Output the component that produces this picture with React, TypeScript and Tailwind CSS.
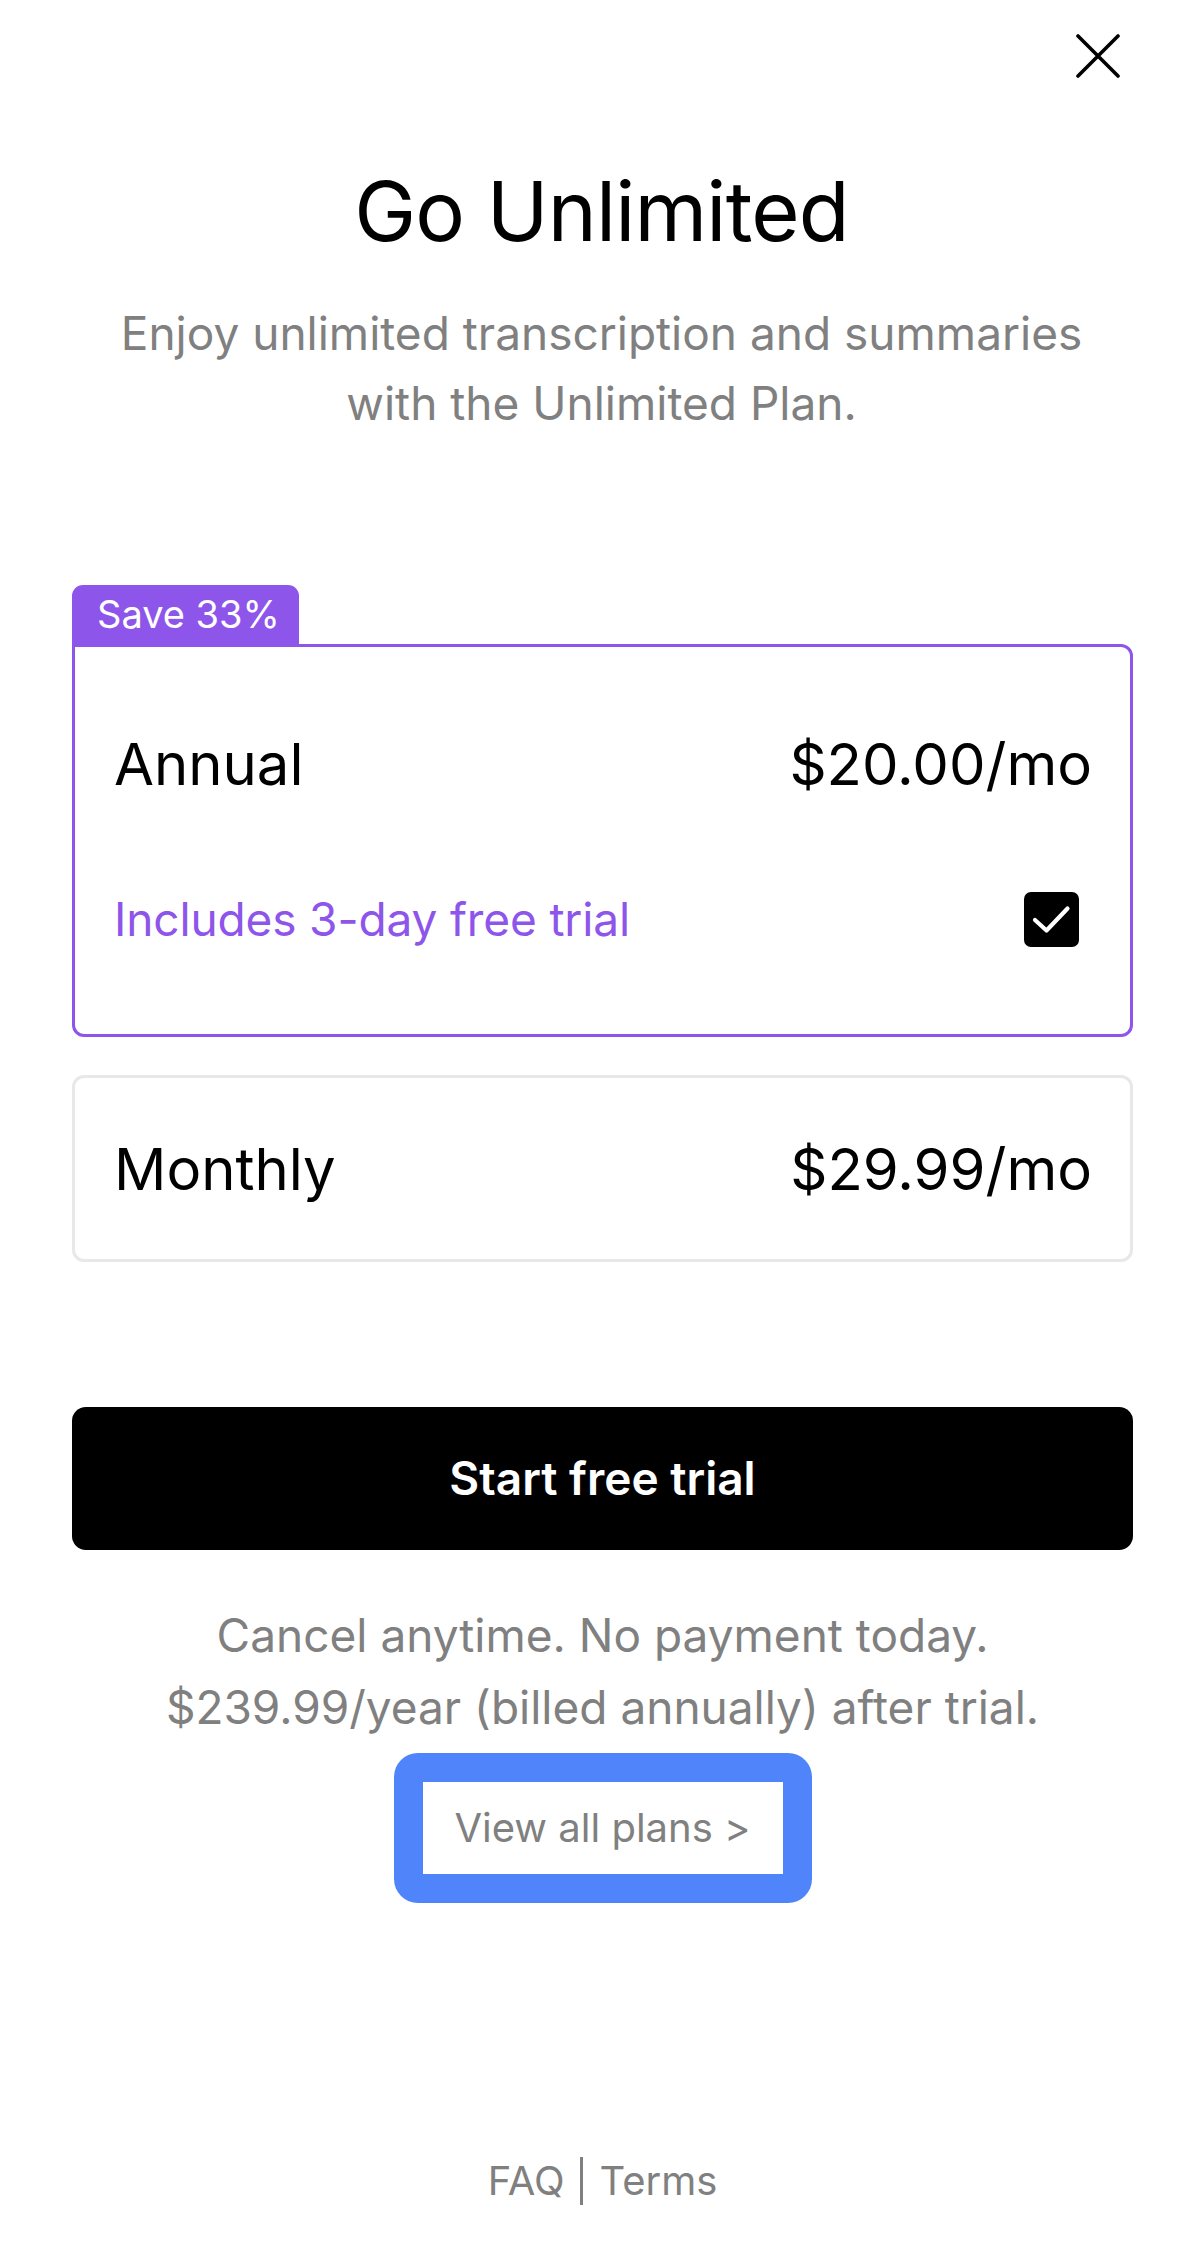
import React, { useState } from 'react';

type Plan = 'annual' | 'monthly';

const CloseIcon = () => (
    <svg width="44" height="44" viewBox="0 0 44 44" fill="none">
        <path d="M2 2L42 42M42 2L2 42" stroke="black" strokeWidth="3.6" strokeLinecap="round" />
    </svg>
);

const App: React.FC = () => {
    const [plan, setPlan] = useState<Plan>('annual');
    const [trial, setTrial] = useState(true);

    return (
        <div className="min-h-screen w-full bg-white text-black" style={{ fontFamily: 'Inter, "Noto Sans", sans-serif' }}>
            {/* Top bar */}
            <div className="flex justify-end pt-[34px] pr-[83px]">
                <button aria-label="Close" className="w-[44px] h-[44px]">
                    <CloseIcon />
                </button>
            </div>

            {/* Heading */}
            <h1 className="mt-[92px] text-center text-[83px] leading-[83px] font-normal tracking-[-0.01em]">Go Unlimited</h1>
            <p className="mt-[45px] text-center text-[46px] leading-[70px] text-[#808080]">
                Enjoy unlimited transcription and summaries
                <br />
                with the Unlimited Plan.
            </p>

            <div className="px-[70px] pl-[72px] mt-[147px]">
                {/* Annual plan */}
                <div className="flex">
                    <div className="h-[59px] w-[227px] bg-[#8E55EA] rounded-t-[11px] text-white text-[38px] leading-[59px] pl-[25px]">
                        Save 33%
                    </div>
                </div>
                <div
                    onClick={() => setPlan('annual')}
                    className={`border-[3px] rounded-[12px] rounded-tl-none pl-[39px] pr-[38px] pt-[88px] pb-[87px] cursor-pointer ${plan === 'annual' ? 'border-[#8E55EA]' : 'border-[#E8E8E8]'}`}
                >
                    <div className="flex justify-between text-[58px] leading-[58px]">
                        <span>Annual</span>
                        <span>$20.00/mo</span>
                    </div>
                    <div className="mt-[99px] flex items-center justify-between h-[55px]">
                        <span className="text-[46px] leading-[55px] tracking-[-0.003em] text-[#8E55EA]">Includes 3-day free trial</span>
                        <button
                            onClick={e => { e.stopPropagation(); setTrial(!trial); }}
                            className={`w-[55px] h-[55px] mr-[13px] rounded-[7px] flex items-center justify-center ${trial ? 'bg-black' : 'bg-white border-[3px] border-black'}`}
                        >
                            {trial && (
                                <svg width="55" height="55" viewBox="0 0 55 55" fill="none">
                                    <path d="M11 28L22.5 38.5L43.5 16.5" stroke="white" strokeWidth="4.2" strokeLinecap="round" strokeLinejoin="round" />
                                </svg>
                            )}
                        </button>
                    </div>
                </div>

                {/* Monthly plan */}
                <div
                    onClick={() => setPlan('monthly')}
                    className={`mt-[38px] h-[187px] border-[3px] rounded-[12px] pl-[39px] pr-[38px] flex items-center justify-between text-[58px] leading-[58px] cursor-pointer ${plan === 'monthly' ? 'border-[#8E55EA]' : 'border-[#E8E8E8]'}`}
                >
                    <span>Monthly</span>
                    <span>$29.99/mo</span>
                </div>

                {/* CTA */}
                <button className="mt-[145px] w-full h-[143px] bg-black rounded-[14px] text-white text-[46px] font-semibold">
                    Start free trial
                </button>

                <p className="mt-[49px] text-center text-[46px] leading-[72px] text-[#808080]">
                    Cancel anytime. No payment today.
                    <br />
                    $239.99/year (billed annually) after trial.
                </p>

                <div className="mt-[10px] flex justify-center">
                    <div className="w-[418px] h-[150px] bg-[#4F84FB] rounded-[24px] p-[29px]">
                        <div className="w-full h-full bg-white flex items-center justify-center text-[40px] text-[#808080]">
                            View all plans &gt;
                        </div>
                    </div>
                </div>

                {/* Footer */}
                <div className="mt-[254px] pb-[60px] flex items-center justify-center text-[40px] leading-[48px] text-[#808080]">
                    <span>FAQ</span>
                    <span className="mx-[16px] w-[3px] h-[48px] bg-[#808080]" />
                    <span>Terms</span>
                </div>
            </div>
        </div>
    );
};

export default App;
